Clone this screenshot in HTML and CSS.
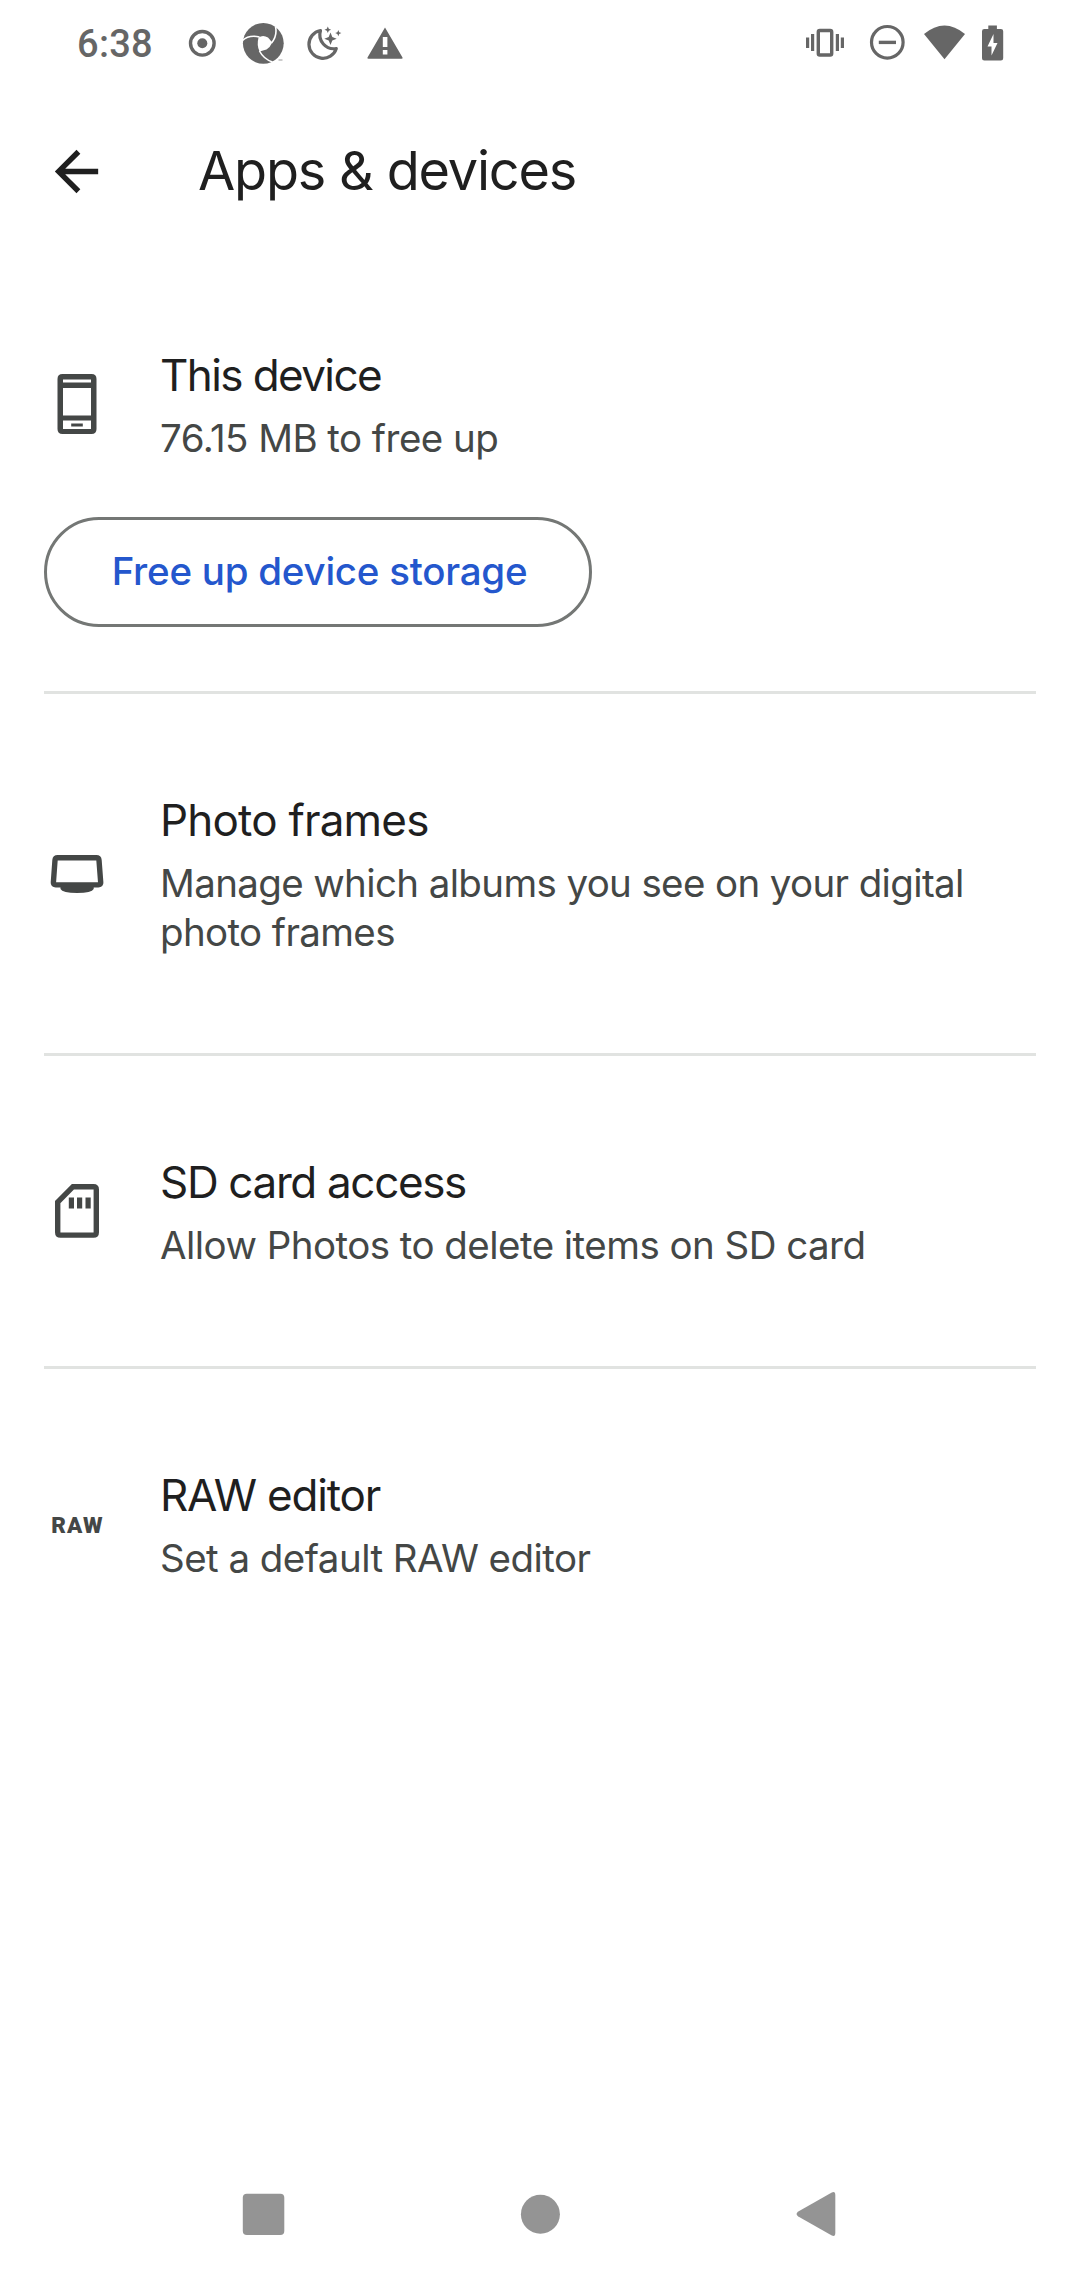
FILE: index.html
```html
<!DOCTYPE html>
<html lang="en">
<head>
<meta charset="utf-8">
<title>Apps &amp; devices</title>
<link rel="stylesheet" href="styles.css">
</head>
<body>
<header class="status-bar">
  <span class="clock">6:38</span>
  <svg class="status-icons" width="220" height="86" viewBox="185 0 220 86" fill="#666">
    <circle cx="202.3" cy="43.3" r="11.8" fill="none" stroke="#666" stroke-width="3.4"/>
    <circle cx="202.3" cy="43.3" r="5"/>
    <circle cx="263.3" cy="43.3" r="20.4"/>
    <path d="M258.500 37.500Q263 34.500 268 37.500L272.300 42.500Q270 47.500 266.500 49.500L259.500 51.500Q256.500 45 258.500 37.500Z" fill="#fff"/>
    <path d="M242.500 40.500Q249 34.500 259.500 37M275.500 26.500Q277.500 36 271.500 43M259.500 51Q263.500 59 272.500 62" fill="none" stroke="#fff" stroke-width="1.600"/>
    <path d="M278.500 60h4" stroke="#aaa" stroke-width="1.200"/>
    <path d="M320.500 30.500A14 14 0 1 0 336.300 48.500A14 14 0 0 1 320.500 30.500Z" fill="none" stroke="#666" stroke-width="3.200" stroke-linejoin="round"/>
    <path d="M330.500 32.500l1.800 4.400 4.400 1.800-4.400 1.800-1.800 4.400-1.800-4.400-4.400-1.800 4.400-1.800zM327.800 26.500l1 2.300 2.300 1-2.300 1-1 2.300-1-2.300-2.300-1 2.300-1zM338.300 30l.9 2.200 2.200.9-2.200.9-.9 2.200-.9-2.200-2.200-.9 2.200-.9z"/>
    <path fill-rule="evenodd" d="M385 27.500L402.500 57.500Q403 58.800 401.500 58.800H368.500Q367 58.800 367.500 57.500ZM382.800 37v10h4.600V37zM382.800 50v4.600h4.600V50z"/>
  </svg>
  <svg class="status-system" width="210" height="86" viewBox="800 0 210 86" fill="#666">
    <rect x="818.300" y="30.500" width="13.400" height="24.500" rx="1.500" fill="none" stroke="#666" stroke-width="3.400"/>
    <path d="M806 37.500h3.200v10.500H806zM811 34h3.200v17H811zM835.800 34h3.200v17h-3.200zM840.800 37.500h3.200v10.500h-3.200z"/>
    <circle cx="887.300" cy="42.300" r="15.800" fill="none" stroke="#666" stroke-width="3.200"/>
    <path d="M878.800 40.700h17.200v3.400h-17.200z"/>
    <path d="M924 34Q944.500 17 965 34L944.500 59.300Z"/>
    <path fill-rule="evenodd" d="M988.300 25.500h8.600v3.500h4q2.300 0 2.300 2.300v27q0 2.300-2.300 2.300h-16.600q-2.300 0-2.300-2.300v-27q0-2.300 2.300-2.300h4zM993.500 34l-6 12.500h4v9l6-12.500h-4z"/>
  </svg>
</header>

<div class="app-bar">
  <svg class="back" width="65" height="65" viewBox="0 0 24 24" fill="#1f1f1f"><path d="M20 11H7.830l5.590-5.590L12 4l-8 8 8 8 1.410-1.410L7.830 13H20z"/></svg>
  <h1 class="page-title">Apps &amp; devices</h1>
</div>

<main class="settings">
  <section class="section">
    <div class="item">
      <svg class="icon" width="64" height="64" viewBox="0 0 64 64" fill="#444746">
        <path fill-rule="evenodd" d="M18.500 1h29q5 0 5 5v50q0 5-5 5h-29q-5 0-5-5V6q0-5 5-5zM19 6.500v3h28v-3zM19 15v27.500h28V15zM19 47.500V56h28v-8.500z"/>
        <path d="M27.200 50.500h11.600v3H27.200z"/>
      </svg>
      <div class="text">
        <h2 class="label device">This device</h2>
        <p class="detail">76.15 MB to free up</p>
      </div>
    </div>
    <button class="pill">Free up device storage</button>
  </section>

  <section class="section">
    <div class="item">
      <svg class="icon" width="64" height="64" viewBox="0 0 64 64">
        <path d="M13.700 14.700h38.600q2.500 0 2.700 2.500l1.700 22.200q.2 2.500-2.300 2.500H11.700q-2.500 0-2.300-2.500L11 17.200q.2-2.500 2.700-2.500z" fill="none" stroke="#444746" stroke-width="5.400"/>
        <path d="M16.500 43.500h33.200v2.500q-2 4-16.600 4T16.500 46z" fill="#444746"/>
      </svg>
      <div class="text">
        <h2 class="label frames">Photo frames</h2>
        <p class="detail albums">Manage which albums you see on your digital<br>photo frames</p>
      </div>
    </div>
  </section>

  <section class="section">
    <div class="item">
      <svg class="icon" width="64" height="64" viewBox="0 0 64 64">
        <path d="M29 6.700H49.500q2.800 0 2.800 2.800V52.300q0 2.800-2.800 2.800H16.500q-2.800 0-2.800-2.800V22z" fill="none" stroke="#444746" stroke-width="5.400"/>
        <path d="M24.800 17.500h5.200v11h-5.200zM33 17.500h5.200v11H33zM41.500 17.500h5.200v11h-5.200z" fill="#444746"/>
      </svg>
      <div class="text">
        <h2 class="label card">SD card access</h2>
        <p class="detail">Allow Photos to delete items on SD card</p>
      </div>
    </div>
  </section>

  <section class="section">
    <div class="item">
      <span class="icon raw">RAW</span>
      <div class="text">
        <h2 class="label editor">RAW editor</h2>
        <p class="detail">Set a default RAW editor</p>
      </div>
    </div>
  </section>
</main>

<nav class="nav-bar">
  <svg width="46" height="46" viewBox="0 0 46 46" fill="#949494"><rect x="2.800" y="2.700" width="41.500" height="41.300" rx="4"/></svg>
  <svg width="46" height="46" viewBox="0 0 46 46" fill="#949494"><circle cx="23.400" cy="23.300" r="19.500"/></svg>
  <svg width="46" height="46" viewBox="0 0 46 46" fill="#949494"><path d="M37.800 1.500Q41.300 0 41.300 4V42Q41.300 46 37.800 44.500L4.300 25.500Q.8 23 4.300 20.500Z"/></svg>
</nav>
</body>
</html>
```
FILE: styles.css
```css
* { box-sizing: border-box; }
body {
  margin: 0;
  width: 1080px;
  height: 2280px;
  display: flex;
  flex-direction: column;
  background: #fff;
  color: #1f1f1f;
  font-family: Inter, "Noto Sans", sans-serif;
}
h1, h2, p { margin: 0; font-weight: 400; }
svg { display: block; flex: none; }

.status-bar {
  height: 86px;
  display: flex;
  align-items: center;
  padding: 0 70px 0 77px;
}
.clock {
  width: 108px;
  padding-top: 2px;
  font: 500 38px/50px Roboto, sans-serif;
  letter-spacing: 0.3px;
  color: #666;
}
.status-system { margin-left: auto; }

.app-bar {
  height: 171px;
  display: flex;
  align-items: center;
  padding: 0 44px;
}
.page-title {
  margin: -2px 0 0 89px;
  font-size: 54px;
  line-height: 64px;
  letter-spacing: -1.2px;
}

.settings { flex: 1; padding: 0 44px; }
.section { padding: 98px 0 96px; border-bottom: 3px solid #e1e3e1; }
.section:first-child { padding: 90px 0 64px; }
.section:last-child { border-bottom: 0; }
.item { display: flex; align-items: center; }
.icon { width: 64px; margin-right: 52px; }
.raw {
  padding-left: 3px;
  font: 900 22.5px/28px Roboto, sans-serif;
  letter-spacing: 1.2px;
  color: #444746;
  text-align: center;
}
.label { font-size: 44px; line-height: 56px; }
.device { letter-spacing: -1.6px; }
.frames { letter-spacing: -0.8px; }
.card { letter-spacing: -1.35px; }
.editor { letter-spacing: -1.2px; }
.detail {
  margin-top: 11px;
  font-size: 38.5px;
  line-height: 49px;
  letter-spacing: -0.54px;
  color: #444746;
}
.albums { letter-spacing: -0.63px; }
.pill {
  display: block;
  width: 548px;
  height: 110px;
  margin-top: 54px;
  padding: 0 0 2px 3px;
  border: 3px solid #747775;
  border-radius: 55px;
  background: none;
  color: #2457cd;
  font: 500 38.5px/48px Inter, sans-serif;
  letter-spacing: -0.24px;
}

.nav-bar {
  height: 132px;
  display: flex;
  justify-content: center;
  align-items: center;
  gap: 231px;
}
```
